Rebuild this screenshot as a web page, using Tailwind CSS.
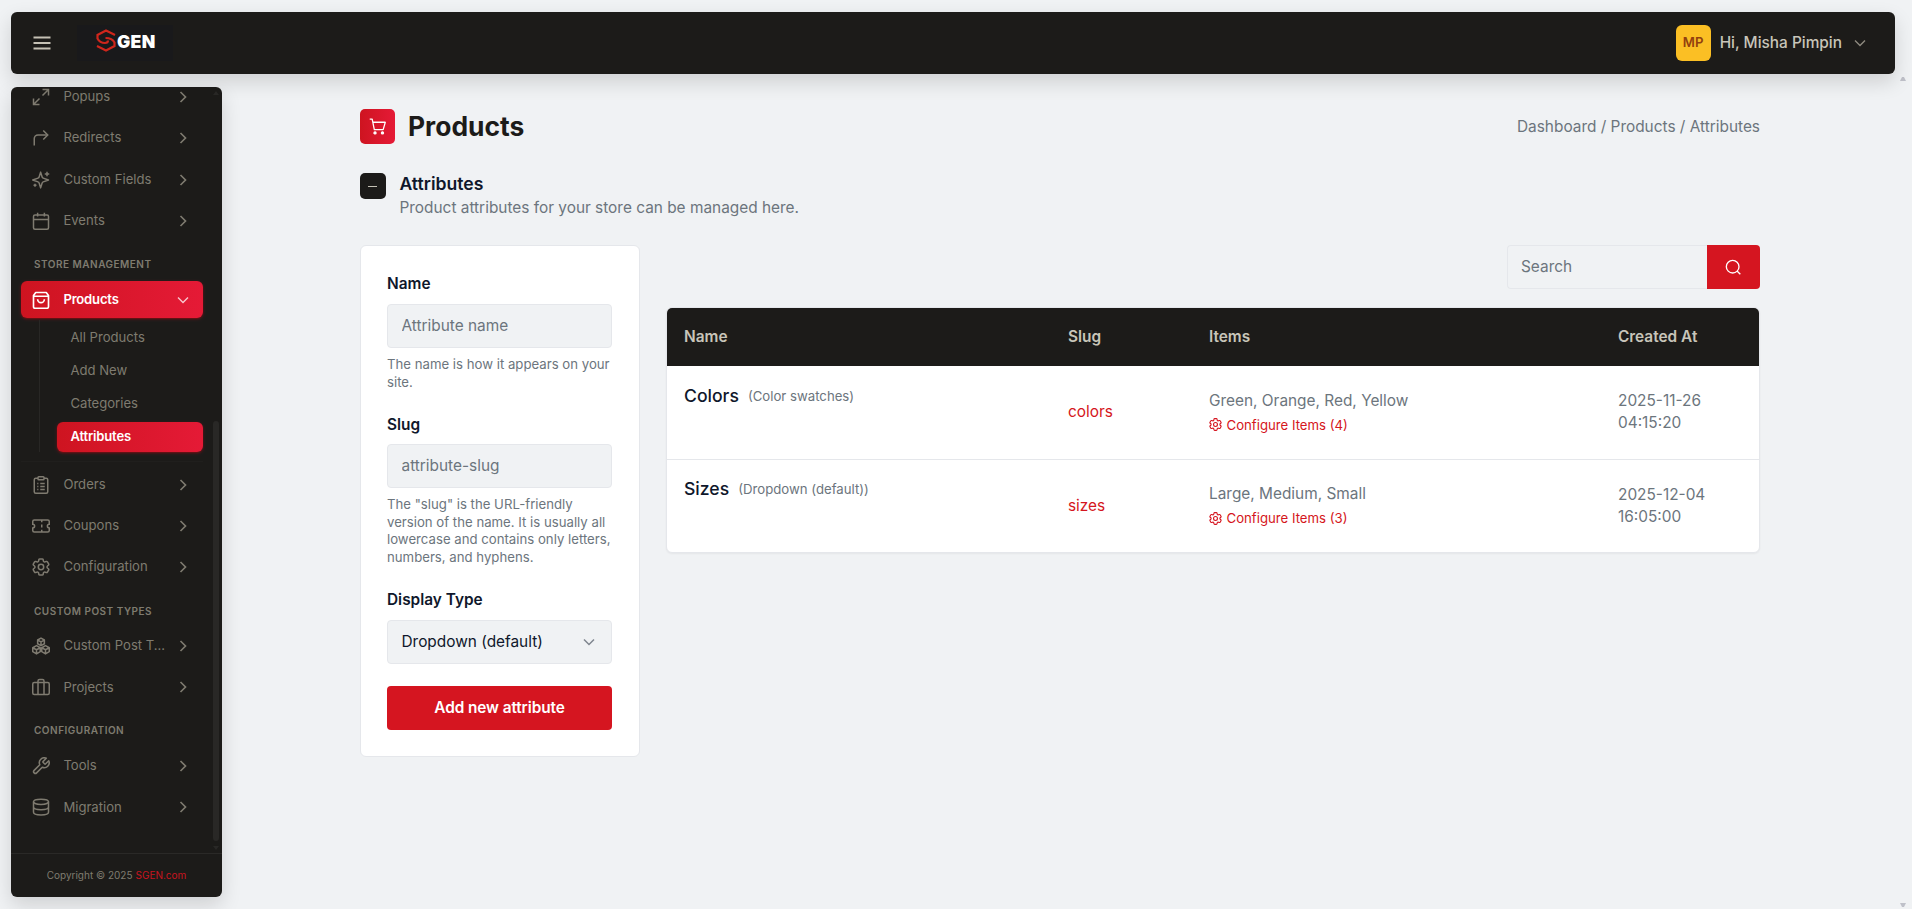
<!DOCTYPE html>
<html lang="en">
<head>
    <meta charset="UTF-8">
    <meta name="viewport" content="width=device-width, initial-scale=1.0">
    <title>Attributes - Products</title>
    <script src="https://cdn.jsdelivr.net/npm/@tailwindcss/browser@4"></script>
</head>
<body class="h-screen overflow-hidden bg-[#f0f2f4] font-[Inter,sans-serif] text-[15.4px] text-slate-900">
    <!-- Icon sprite -->
    <svg class="hidden">
        <symbol id="chevron" viewBox="0 0 24 24"><path d="m9 18 6-6-6-6"/></symbol>
        <symbol id="chevron-down" viewBox="0 0 24 24"><path d="m6 9 6 6 6-6"/></symbol>
        <symbol id="cog" viewBox="0 0 24 24"><path d="M9.594 3.94c.09-.542.56-.94 1.11-.94h2.593c.55 0 1.02.398 1.11.94l.213 1.281c.063.374.313.686.645.87.074.04.147.083.22.127.325.196.72.257 1.075.124l1.217-.456a1.125 1.125 0 0 1 1.37.49l1.296 2.247a1.125 1.125 0 0 1-.26 1.431l-1.003.827c-.293.241-.438.613-.43.992a7.723 7.723 0 0 1 0 .255c-.008.378.137.75.43.991l1.004.827c.424.35.534.955.26 1.43l-1.298 2.247a1.125 1.125 0 0 1-1.369.491l-1.217-.456c-.355-.133-.75-.072-1.076.124a6.47 6.47 0 0 1-.22.128c-.331.183-.581.495-.644.869l-.213 1.281c-.09.543-.56.94-1.11.94h-2.594c-.55 0-1.019-.398-1.11-.94l-.213-1.281c-.062-.374-.312-.686-.644-.87a6.52 6.52 0 0 1-.22-.127c-.325-.196-.72-.257-1.076-.124l-1.217.456a1.125 1.125 0 0 1-1.369-.49l-1.297-2.247a1.125 1.125 0 0 1 .26-1.431l1.004-.827c.292-.24.437-.613.43-.991a6.932 6.932 0 0 1 0-.255c.007-.38-.138-.751-.43-.992l-1.004-.827a1.125 1.125 0 0 1-.26-1.43l1.297-2.247a1.125 1.125 0 0 1 1.37-.491l1.216.456c.356.133.751.072 1.076-.124.072-.044.146-.086.22-.128.332-.183.582-.495.644-.869l.214-1.28Z"/><circle cx="12" cy="12" r="3"/></symbol>
    </svg>

    <div class="flex h-full flex-col gap-[13px] pt-3 pl-[11px]">
        <!-- Top bar -->
        <header class="z-10 mr-[17px] flex h-[62px] shrink-0 items-center rounded-md bg-[#1c1b19] pr-[25px] pl-[22px] shadow-[0_8px_20px_rgba(0,0,0,0.14)]">
            <svg class="size-[18px] text-[#c5c1b5]" viewBox="0 0 18 18" fill="none" stroke="currentColor" stroke-width="1.8"><path d="M.5 3.5h17M.5 9h17M.5 14.5h17"/></svg>
            <div class="ml-[26px] flex h-9 w-24 items-start bg-[#19191b] pt-[4px] pl-[19px]">
                <svg class="h-[23px] w-5 text-[#cf261c]" viewBox="0 0 20 23" fill="none" stroke="currentColor" stroke-width="2.2"><path d="M19 6 10 1.5 1.500 6v3.5C3 12.500 6 14 9 14c2 0 3-1 3-2.500"/><path d="m1 17 9 4.500 8.500-4.500v-3.500C17 10.500 14 9 9.500 9"/></svg>
                <span class="mt-[4px] ml-[1px] text-[17.6px] leading-[18px] font-black tracking-[0.3px] text-white">GEN</span>
            </div>
            <div class="ml-auto flex items-center">
                <div class="flex h-9 w-[35px] items-center justify-center rounded-md bg-[#fbbf24] text-[13.2px] font-semibold text-[#92400e]">MP</div>
                <span class="ml-[9px] font-medium text-[#c8c5b9]">Hi, Misha Pimpin</span>
                <svg class="ml-2 size-5 text-[#8f8b80]" fill="none" stroke="currentColor" stroke-width="1.6"><use href="#chevron-down"/></svg>
            </div>
        </header>

        <div class="flex min-h-0 flex-1">
            <!-- Sidebar -->
            <aside class="relative flex h-[810px] w-[211px] shrink-0 flex-col overflow-hidden rounded-md bg-[#1c1b19] text-[13.1px] text-[#7f7b70] shadow-[0_8px_20px_rgba(0,0,0,0.14)]">
                <nav class="min-h-0 flex-1 overflow-hidden pr-[19px] pl-[10px]">
                    <div class="-mt-[10.7px]">
                        <div class="flex h-[41.3px] items-center pr-[10px] pl-[11px]">
                            <svg class="mr-[13.4px] size-[18px]" viewBox="0 0 24 24" fill="none" stroke="currentColor" stroke-width="2"><path d="M14 2h8v8M22 2l-8 8M10 22H2v-8M2 22l8-8"/></svg>
                            <span class="flex-1">Popups</span>
                            <svg class="size-5" fill="none" stroke="currentColor" stroke-width="2"><use href="#chevron"/></svg>
                        </div>
                        <div class="flex h-[41.3px] items-center pr-[10px] pl-[11px]">
                            <svg class="mr-[13.4px] size-[18px]" viewBox="0 0 24 24" fill="none" stroke="currentColor" stroke-width="2"><path d="m15 14 6-6-6-6"/><path d="M3 22v-9a5 5 0 0 1 5-5h13"/></svg>
                            <span class="flex-1">Redirects</span>
                            <svg class="size-5" fill="none" stroke="currentColor" stroke-width="2"><use href="#chevron"/></svg>
                        </div>
                        <div class="flex h-[41.3px] items-center pr-[10px] pl-[11px]">
                            <svg class="mr-[13.4px] size-[18px]" viewBox="0 0 24 24" fill="none" stroke="currentColor" stroke-width="2" stroke-linejoin="round"><path d="M11.5 1.5 9.5 8A2 2 0 0 1 8 9.500L1 12l7 2.500A2 2 0 0 1 9.500 16l2 6.500 2-6.500a2 2 0 0 1 1.500-1.500l7-2.500-7-2.500A2 2 0 0 1 13.500 8z"/><path d="M20 1v6M17 4h6M4 17v4M2 19h4"/></svg>
                            <span class="flex-1">Custom Fields</span>
                            <svg class="size-5" fill="none" stroke="currentColor" stroke-width="2"><use href="#chevron"/></svg>
                        </div>
                        <div class="flex h-[41.3px] items-center pr-[10px] pl-[11px]">
                            <svg class="mr-[13.4px] size-[18px]" viewBox="0 0 24 24" fill="none" stroke="currentColor" stroke-width="2"><rect x="2" y="4" width="20" height="19" rx="2"/><path d="M2 10h20M7.5 1v5M16.5 1v5"/></svg>
                            <span class="flex-1">Events</span>
                            <svg class="size-5" fill="none" stroke="currentColor" stroke-width="2"><use href="#chevron"/></svg>
                        </div>

                        <h3 class="flex h-[37.5px] items-center pt-[9px] pl-[13px] text-[10px] font-semibold tracking-[0.5px]">STORE MANAGEMENT</h3>
                        <div class="py-[2px]">
                            <div class="flex h-[37px] items-center rounded-md bg-linear-to-r from-[#ce1420] to-[#e51a36] pr-[10px] pl-[11px] font-semibold text-white shadow-sm shadow-red-600/40">
                                <svg class="mr-[13.4px] size-[18px]" viewBox="0 0 24 24" fill="none" stroke="currentColor" stroke-width="2.2" stroke-linejoin="round"><path d="M5 2h14l3 4v15a2 2 0 0 1-2 2H4a2 2 0 0 1-2-2V6zM2 7h20M7.5 11a4.5 4.5 0 0 0 9 0"/></svg>
                                <span class="flex-1 tracking-[-0.2px]">Products</span>
                                <svg class="size-5 text-white/75" fill="none" stroke="currentColor" stroke-width="1.7"><use href="#chevron-down"/></svg>
                            </div>
                        </div>
                        <div class="ml-[18px] flex h-[131.5px] flex-col justify-end gap-[3px] border-l border-[#282725] pl-[17px]">
                            <a class="flex h-[30px] items-center pl-[13.5px]">All Products</a>
                            <a class="flex h-[30px] items-center pl-[13.5px]">Add New</a>
                            <a class="flex h-[30px] items-center pl-[13.5px]">Categories</a>
                            <a class="flex h-[30px] items-center rounded-md bg-linear-to-r from-[#ce1420] to-[#e51a36] pl-[13.5px] font-semibold tracking-[-0.2px] text-white shadow-sm shadow-red-600/40">Attributes</a>
                        </div>
                        <div class="mt-[9px] mb-[2.5px] h-px bg-[#201f1d]"></div>
                        <div class="flex h-[41.3px] items-center pr-[10px] pl-[11px]">
                            <svg class="mr-[13.4px] size-[18px]" viewBox="0 0 24 24" fill="none" stroke="currentColor" stroke-width="2"><path d="M8 3H5a2 2 0 0 0-2 2v16a2 2 0 0 0 2 2h14a2 2 0 0 0 2-2V5a2 2 0 0 0-2-2h-3"/><rect x="8" y="1" width="8" height="4" rx="1"/><path d="M7 10h1.5M7 14h1.5M7 18h1.5M11 10h6M11 14h6M11 18h6"/></svg>
                            <span class="flex-1">Orders</span>
                            <svg class="size-5" fill="none" stroke="currentColor" stroke-width="2"><use href="#chevron"/></svg>
                        </div>
                        <div class="flex h-[41.3px] items-center pr-[10px] pl-[11px]">
                            <svg class="mr-[13.4px] size-[18px]" viewBox="0 0 24 24" fill="none" stroke="currentColor" stroke-width="2"><path d="M1 9.500V6a2 2 0 0 1 2-2h18a2 2 0 0 1 2 2v3.500a2.500 2.500 0 0 0 0 5V18a2 2 0 0 1-2 2H3a2 2 0 0 1-2-2v-3.500a2.500 2.500 0 0 0 0-5zM13 4v3M13 10v4M13 17v3"/></svg>
                            <span class="flex-1">Coupons</span>
                            <svg class="size-5" fill="none" stroke="currentColor" stroke-width="2"><use href="#chevron"/></svg>
                        </div>
                        <div class="flex h-[41.3px] items-center pr-[10px] pl-[11px]">
                            <svg class="mr-[13.4px] size-[18px]" viewBox="2 2 20 20" fill="none" stroke="currentColor" stroke-width="1.7"><use href="#cog" width="24" height="24"/></svg>
                            <span class="flex-1">Configuration</span>
                            <svg class="size-5" fill="none" stroke="currentColor" stroke-width="2"><use href="#chevron"/></svg>
                        </div>

                        <h3 class="flex h-[37.5px] items-center pt-[9px] pl-[13px] text-[10px] font-semibold tracking-[0.5px]">CUSTOM POST TYPES</h3>
                        <div class="flex h-[41.3px] items-center pr-[10px] pl-[11px]">
                            <svg class="mr-[13.4px] size-[18px]" viewBox="0 0 24 24" fill="none" stroke="currentColor" stroke-width="2" stroke-linejoin="round"><path d="m12 1.500 4.500 2.500v5L12 11.500 7.500 9V4zM7.500 4l4.500 2.500L16.500 4M12 6.500v5M6 11.500l5 2.800v5.200L6 22.500l-5-3v-5.200zM1 14.300 6 17l5-2.700M6 17v5.500M18 11.500l5 2.800v5.200l-5 3-5-3v-5.200zM13 14.300l5 2.700 5-2.700M18 17v5.500"/></svg>
                            <span class="flex-1">Custom Post T...</span>
                            <svg class="size-5" fill="none" stroke="currentColor" stroke-width="2"><use href="#chevron"/></svg>
                        </div>
                        <div class="flex h-[41.3px] items-center pr-[10px] pl-[11px]">
                            <svg class="mr-[13.4px] size-[18px]" viewBox="0 0 24 24" fill="none" stroke="currentColor" stroke-width="2"><rect x="1" y="6" width="22" height="16" rx="2"/><path d="M8 22V4a2 2 0 0 1 2-2h4a2 2 0 0 1 2 2v18"/></svg>
                            <span class="flex-1">Projects</span>
                            <svg class="size-5" fill="none" stroke="currentColor" stroke-width="2"><use href="#chevron"/></svg>
                        </div>

                        <h3 class="flex h-[37.5px] items-center pt-2 pl-[13px] text-[10px] font-semibold tracking-[0.5px]">CONFIGURATION</h3>
                        <div class="flex h-[41.3px] items-center pr-[10px] pl-[11px]">
                            <svg class="mr-[13.4px] size-[18px]" viewBox="1 1 22 22" fill="none" stroke="currentColor" stroke-width="1.9" stroke-linejoin="round"><path d="M14.7 6.300a1 1 0 0 0 0 1.400l1.600 1.600a1 1 0 0 0 1.400 0l3.770-3.770a6 6 0 0 1-7.940 7.940l-6.910 6.910a2.120 2.120 0 0 1-3-3l6.910-6.910a6 6 0 0 1 7.940-7.940l-3.760 3.760z"/></svg>
                            <span class="flex-1">Tools</span>
                            <svg class="size-5" fill="none" stroke="currentColor" stroke-width="2"><use href="#chevron"/></svg>
                        </div>
                        <div class="flex h-[41.3px] items-center pr-[10px] pl-[11px]">
                            <svg class="mr-[13.4px] size-[18px]" viewBox="0 0 24 24" fill="none" stroke="currentColor" stroke-width="2"><ellipse cx="12" cy="5" rx="10" ry="3.5"/><path d="M2 5v14c0 2 4.500 3.500 10 3.500s10-1.500 10-3.500V5M2 12c0 2 4.500 3.500 10 3.500s10-1.500 10-3.500"/></svg>
                            <span class="flex-1">Migration</span>
                            <svg class="size-5" fill="none" stroke="currentColor" stroke-width="2"><use href="#chevron"/></svg>
                        </div>
                    </div>
                </nav>
                <div class="flex h-[44px] shrink-0 items-center justify-center gap-[3px] border-t border-[#2a2927] pb-px text-[10px]">
                    <span>Copyright © 2025</span><a class="text-[#c9141f]">SGEN.com</a>
                </div>
                <!-- Scrollbar -->
                <div class="absolute top-[334px] right-[3px] h-[420px] w-[6px] rounded-full bg-[#292826]"></div>
                <svg class="absolute top-[4px] right-[3px] h-1 w-[6px] text-[#292826]" viewBox="0 0 6 4" fill="currentColor"><path d="M0 4 3 0l3 4z"/></svg>
                <svg class="absolute top-[759px] right-[3px] h-1 w-[6px] text-[#292826]" viewBox="0 0 6 4" fill="currentColor"><path d="m0 0 3 4 3-4z"/></svg>
            </aside>

            <!-- Main content -->
            <main class="ml-[138px] w-[1400px] pt-[22px]">
                <div class="flex h-[35px] items-center">
                    <div class="flex size-[35px] items-center justify-center rounded-[5px] bg-linear-to-r from-[#ce1420] to-[#e51a36] pr-px text-white">
                        <svg class="size-[17px]" viewBox="0 0 24 24" fill="none" stroke="currentColor" stroke-width="1.8" stroke-linejoin="round"><path d="M1 1.5h3.5l3 15H20L23 6H5.5"/><circle cx="8.5" cy="21" r="1.5" fill="currentColor"/><circle cx="19" cy="21" r="1.5" fill="currentColor"/></svg>
                    </div>
                    <h1 class="ml-[13px] text-[26.4px] font-bold text-[#1c1b19]">Products</h1>
                    <p class="ml-auto pt-px text-[#6c757d]">Dashboard / Products / Attributes</p>
                </div>

                <div class="mt-[29px] flex h-[44px]">
                    <div class="flex size-[26px] items-center justify-center rounded-[5px] bg-[#1c1b19] pr-px"><div class="h-px w-[9px] bg-[#c5c1b5]"></div></div>
                    <div class="ml-[13.5px]">
                        <h2 class="text-[17.6px] leading-[22px] font-semibold">Attributes</h2>
                        <p class="leading-[25px] text-[#6c757d]">Product attributes for your store can be managed here.</p>
                    </div>
                </div>

                <div class="mt-[28px] flex items-start gap-[26px]">
                    <!-- Attribute form -->
                    <form class="h-[512px] w-[280px] rounded-md border border-gray-200 bg-white pt-[26px] pr-[27px] pl-[26px]">
                        <label class="block h-[32px] leading-[23px] font-semibold">Name</label>
                        <input type="text" placeholder="Attribute name" class="block h-[44px] w-full rounded border border-gray-200 bg-[#f0f2f4] px-[13.5px] pb-px placeholder:text-[#6c757d]">
                        <p class="mt-2 text-[13.2px] leading-[17.6px] text-[#6c757d]">The name is how it appears on your site.</p>
                        <label class="mt-[20.8px] block h-[32px] leading-[25px] font-semibold">Slug</label>
                        <input type="text" placeholder="attribute-slug" class="block h-[44px] w-full rounded border border-gray-200 bg-[#f0f2f4] px-[13.5px] placeholder:text-[#6c757d]">
                        <p class="mt-2 text-[13.2px] leading-[17.6px] text-[#6c757d]">The "slug" is the URL-friendly version of the name. It is usually all lowercase and contains only letters, numbers, and hyphens.</p>
                        <label class="mt-[21.6px] block h-[32px] leading-[24px] font-semibold">Display Type</label>
                        <div class="flex h-[44px] items-center justify-between rounded border border-gray-200 bg-[#f0f2f4] pr-3 pl-[13.5px]">
                            <span class="pb-px">Dropdown (default)</span>
                            <svg class="size-5 text-[#7f868f]" fill="none" stroke="currentColor" stroke-width="1.8"><use href="#chevron-down"/></svg>
                        </div>
                        <button type="button" class="mt-[22px] block h-[44px] w-full rounded bg-[#d51520] pb-px font-semibold tracking-[-0.1px] text-white">Add new attribute</button>
                    </form>

                    <!-- Attribute list -->
                    <section class="w-[1094px]">
                        <div class="flex h-[44px] justify-end">
                            <input type="text" placeholder="Search" class="w-[200px] rounded-l border border-r-0 border-gray-200 px-[13px] placeholder:text-[#6c757d]">
                            <button type="button" class="flex w-[53px] items-center justify-center rounded-r bg-[#d51520] pr-[2px] text-white">
                                <svg class="size-[16px]" viewBox="0 0 24 24" fill="none" stroke="currentColor" stroke-width="2"><circle cx="11.5" cy="11.5" r="9.5"/><path d="m18 18 5 5"/></svg>
                            </button>
                        </div>
                        <div class="mt-[18px] overflow-hidden rounded-md border border-gray-200 bg-white text-[#6c757d] shadow-xs">
                            <div class="grid h-[58px] grid-cols-[384px_141px_409px_1fr] items-center bg-[#1c1b19] pl-[17px] font-semibold text-[#c8c5b9]">
                                <span>Name</span><span>Slug</span><span>Items</span><span>Created At</span>
                            </div>
                            <div class="grid h-[94px] grid-cols-[384px_141px_409px_1fr] items-center border-b border-gray-200 pl-[17px]">
                                <div class="flex items-center gap-[9px] pb-[32px]"><span class="text-[17.6px] font-medium text-slate-900">Colors</span><span class="text-[13.2px]">(Color swatches)</span></div>
                                <span class="pb-[2px] text-[#d51520]">colors</span>
                                <div>
                                    <p class="leading-[24px]">Green, Orange, Red, Yellow</p>
                                    <a class="flex items-center gap-[4.5px] text-[13.2px] leading-[24px] text-[#d51520]"><svg class="size-[13px]" viewBox="2 2 20 20" fill="none" stroke="currentColor" stroke-width="1.7"><use href="#cog" width="24" height="24"/></svg>Configure Items (4)</a>
                                </div>
                                <span class="pb-[2px] leading-[22px]">2025-11-26<br>04:15:20</span>
                            </div>
                            <div class="grid h-[92px] grid-cols-[384px_141px_409px_1fr] items-center pl-[17px]">
                                <div class="flex items-center gap-[9px] pb-[33px]"><span class="text-[17.6px] font-medium text-slate-900">Sizes</span><span class="text-[13.2px]">(Dropdown (default))</span></div>
                                <span class="text-[#d51520]">sizes</span>
                                <div>
                                    <p class="leading-[24px]">Large, Medium, Small</p>
                                    <a class="flex items-center gap-[4.5px] text-[13.2px] leading-[24px] text-[#d51520]"><svg class="size-[13px]" viewBox="2 2 20 20" fill="none" stroke="currentColor" stroke-width="1.7"><use href="#cog" width="24" height="24"/></svg>Configure Items (3)</a>
                                </div>
                                <span class="pb-[1px] leading-[22px]">2025-12-04<br>16:05:00</span>
                            </div>
                        </div>
                    </section>
                </div>
            </main>
        </div>
    </div>

    <!-- Page scrollbar arrows -->
    <svg class="absolute top-[77px] right-[6px] h-1 w-[6px] text-[#bfc1c9]" viewBox="0 0 6 4" fill="currentColor"><path d="M0 4 2 0h2l2 4z"/></svg>
    <svg class="absolute top-[903px] right-[6px] h-1 w-[6px] text-[#bfc1c9]" viewBox="0 0 6 4" fill="currentColor"><path d="m0 0 2 4h2l2-4z"/></svg>
</body>
</html>
